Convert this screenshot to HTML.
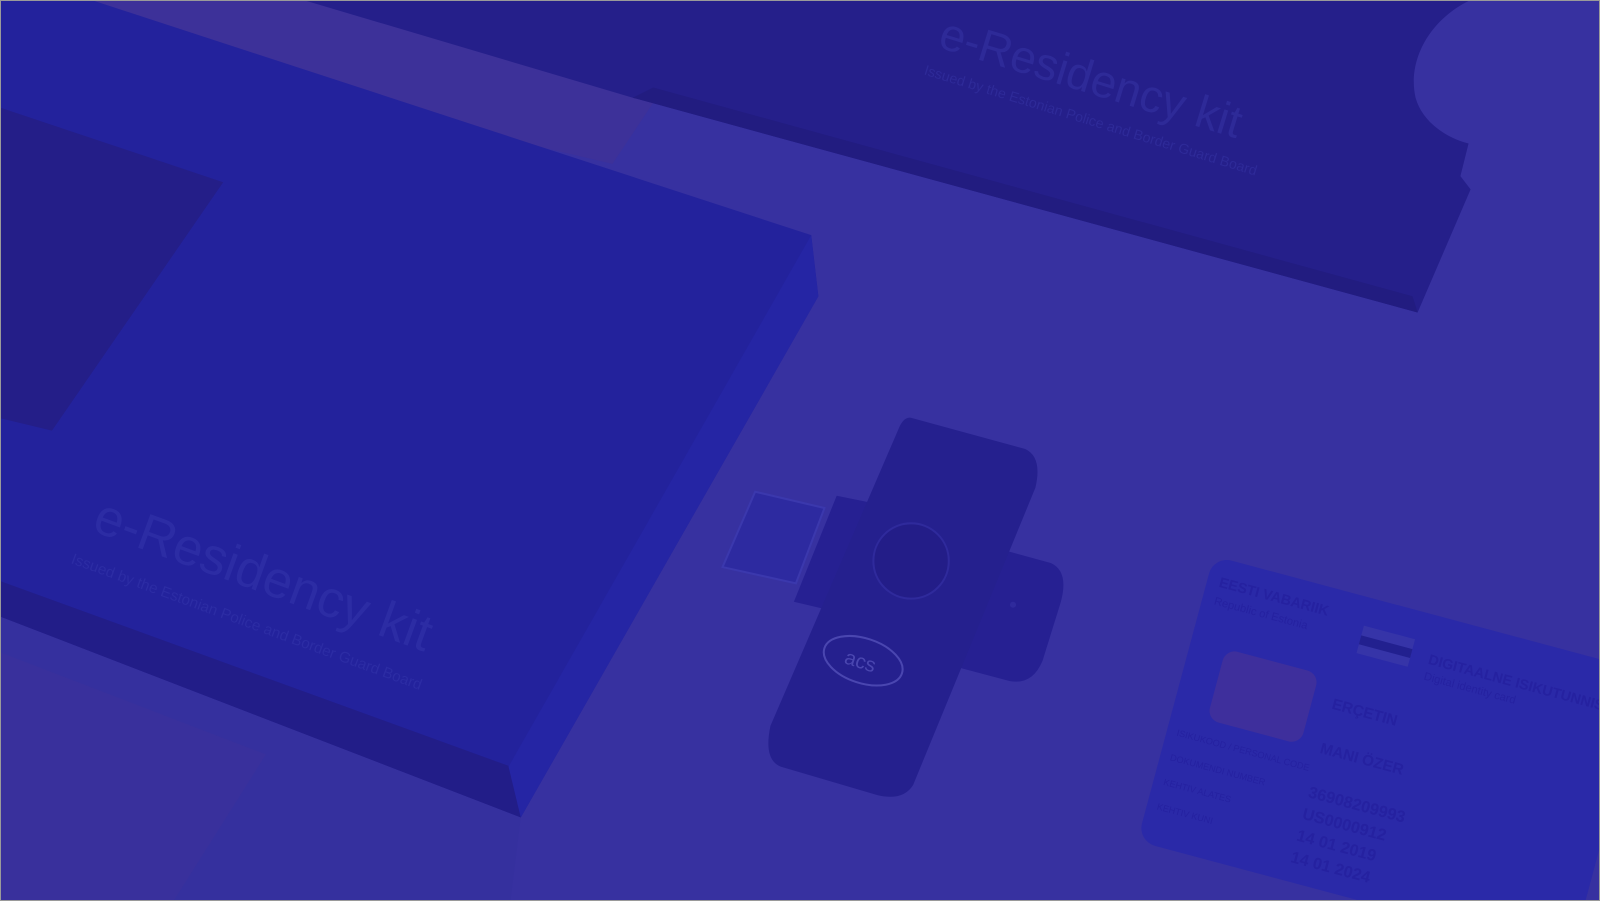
<!DOCTYPE html>
<html><head><meta charset="utf-8"><style>
html,body{margin:0;padding:0;background:#9a9a9a;width:1600px;height:901px;overflow:hidden;}
.wrap{position:absolute;left:1px;top:1px;width:1598px;height:899px;overflow:hidden;}
svg{display:block;overflow:hidden;}
text{font-family:"Liberation Sans",sans-serif;}
</style></head><body><div class="wrap">
<svg width="1598" height="899" viewBox="0 0 1568 883" preserveAspectRatio="none">
<defs><clipPath id="c"><rect width="1568" height="883"/></clipPath></defs>
<g clip-path="url(#c)">
<rect width="1568" height="883" fill="#3731a0"/>
<polygon points="60,0 300,0 640,100 600,160 0,20" fill="#3d3199"/>
<path d="M300,0 L1440,0 C1400,20 1380,60 1388,95 C1395,120 1420,135 1440,140 L1432,172 L1442,185 L1390,306 L620,95 Z" fill="#251f8a"/>
<polygon points="620,95 1390,306 1385,290 640,85" fill="#221c80"/>
<text x="0" y="0" transform="translate(918,45) rotate(17)" font-size="45" fill="#2e2a98">e-Residency kit</text>
<text x="0" y="0" transform="translate(905,72) rotate(17)" font-size="14" fill="#2e2a98">Issued by the Estonian Police and Border Guard Board</text>
<polygon points="0,-30 795,230 802,290 510,802 0,600" fill="#23229c"/>
<polygon points="0,570 500,752 510,802 0,605" fill="#221d88"/>
<polygon points="795,230 802,290 510,802 498,752" fill="#2525a4"/>
<polygon points="0,105 218,178 50,422 0,410" fill="#241e88"/>
<text x="0" y="0" transform="translate(88,520) rotate(20)" font-size="51" fill="#2c2ca4">e-Residency kit</text>
<text x="0" y="0" transform="translate(68,552) rotate(20)" font-size="15" fill="#2c2ca4">Issued by the Estonian Police and Border Guard Board</text>
<polygon points="0,605 510,802 500,883 0,883" fill="#35309e"/>
<polygon points="0,640 260,740 170,883 0,883" fill="#39309c"/>
<g>
<polygon points="740,482 808,498 780,572 708,556" fill="#2d2aa0" stroke="#3b38ad" stroke-width="2"/>
<path d="M820,486 L860,494 L820,600 L778,590 Z" fill="#262092"/>
<path d="M968,535 L1030,552 Q1048,560 1040,590 L1022,648 Q1012,672 990,668 L930,652 Z" fill="#262092"/>
<path d="M895,410 L1005,440 Q1022,448 1015,478 L895,770 Q885,786 860,780 L765,752 Q748,745 755,712 L880,422 Q886,406 895,410 Z" fill="#25208e"/>
<circle cx="893" cy="550" r="37" fill="#231d88" stroke="#2f2a9c" stroke-width="2"/>
<ellipse cx="846" cy="648" rx="40" ry="22" transform="rotate(18 846 648)" fill="none" stroke="#4a46b0" stroke-width="2"/>
<text x="828" y="656" font-size="20" fill="#4a46b0" transform="rotate(18 846 648)">acs</text>
<circle cx="993" cy="593" r="3" fill="#2f2a9c"/>
</g>
<g transform="translate(1190,545) rotate(15)">
<rect x="0" y="0" width="440" height="290" rx="18" fill="#2a29a8"/>
<text x="12" y="28" font-size="14" font-weight="bold" fill="#2521a0">EESTI VABARIIK</text>
<text x="12" y="46" font-size="11" fill="#2521a0">Republic of Estonia</text>
<rect x="160" y="28" width="52" height="28" fill="#3634a8"/>
<rect x="160" y="38" width="52" height="9" fill="#22208f"/>
<text x="230" y="48" font-size="14" font-weight="bold" fill="#2521a0">DIGITAALNE ISIKUTUNNISTUS</text>
<text x="230" y="64" font-size="11" fill="#2521a0">Digital identity card</text>
<rect x="35" y="85" width="95" height="72" rx="12" fill="#3e2f9c"/>
<text x="150" y="115" font-size="15" font-weight="bold" fill="#2521a0">ERÇETIN</text>
<text x="150" y="160" font-size="15" font-weight="bold" fill="#2521a0">MANI ÖZER</text>
<text x="150" y="205" font-size="16" font-weight="bold" fill="#2521a0">36908209993</text>
<text x="150" y="227" font-size="16" font-weight="bold" fill="#2521a0">US0000912</text>
<text x="150" y="249" font-size="16" font-weight="bold" fill="#2521a0">14 01 2019</text>
<text x="150" y="271" font-size="16" font-weight="bold" fill="#2521a0">14 01 2024</text>
<text x="10" y="180" font-size="9" fill="#2521a0">ISIKUKOOD / PERSONAL CODE</text>
<text x="10" y="205" font-size="9" fill="#2521a0">DOKUMENDI NUMBER</text>
<text x="10" y="230" font-size="9" fill="#2521a0">KEHTIV ALATES</text>
<text x="10" y="255" font-size="9" fill="#2521a0">KEHTIV KUNI</text>
</g>
</g>
</svg>
</div></body></html>
